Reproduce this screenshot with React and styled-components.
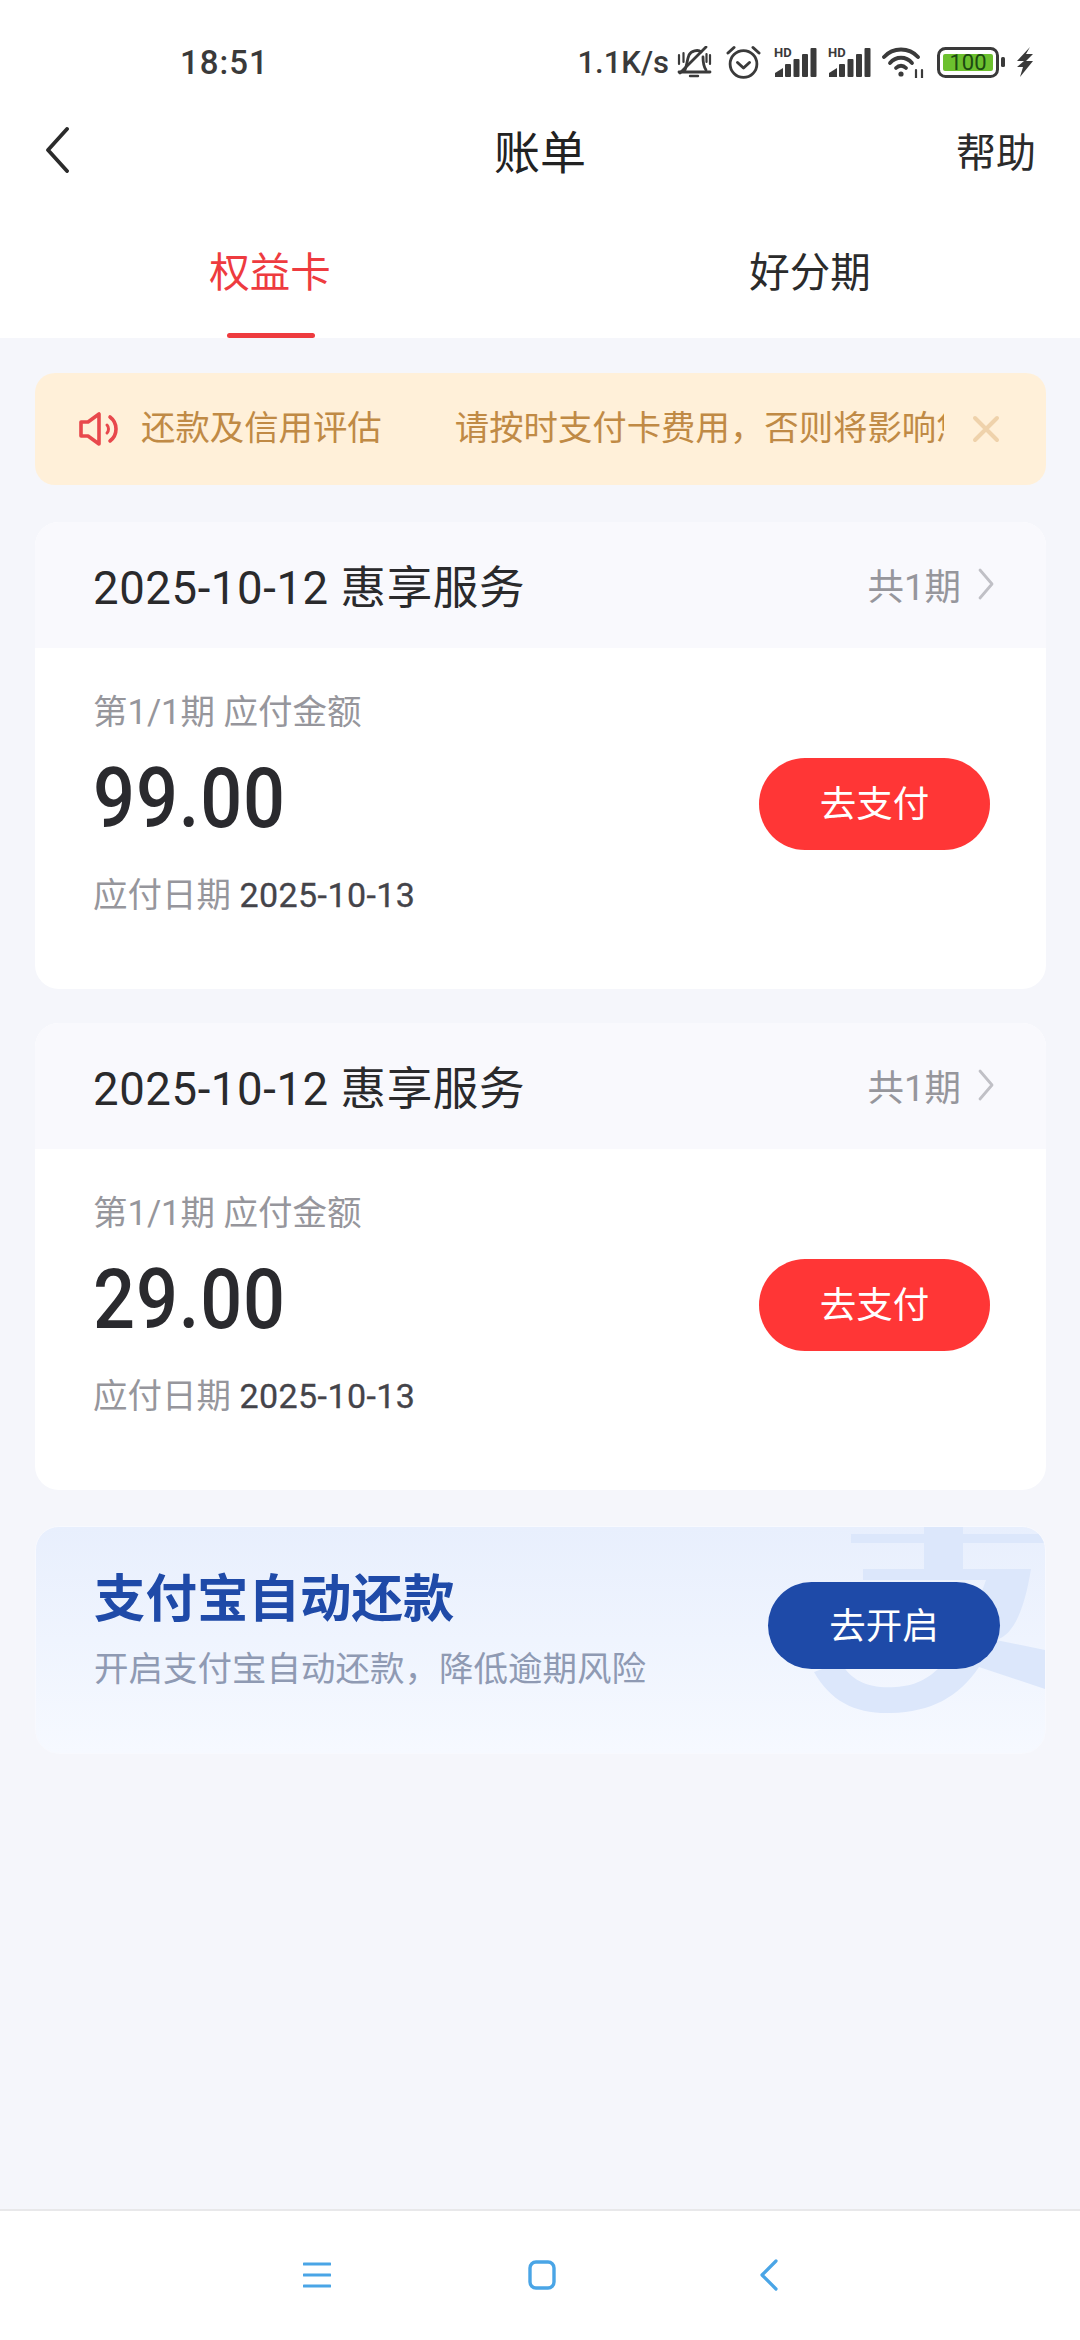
import styled, { createGlobalStyle } from 'styled-components';

const FONT = `Roboto, "Noto Sans CJK SC", sans-serif`;

const GlobalStyle = createGlobalStyle`
  html, body { margin: 0; padding: 0; background: #f5f6fb; }
  * { box-sizing: border-box; }
  body { font-family: ${FONT}; }
`;

const Page = styled.div`
  width: 1080px;
  height: 2340px;
  display: flex;
  flex-direction: column;
  background: #f5f6fb;
  overflow: hidden;
`;

const Top = styled.header`
  background: #fff;
`;

const StatusBar = styled.div`
  height: 84px;
  padding: 40px 46px 0 180px;
  display: flex;
  align-items: center;
  color: #3a3a3a;
`;

const Time = styled.span`
  font-size: 33px;
  font-weight: 500;
  letter-spacing: 1px;
  flex: 1;
`;

const Speed = styled.span`
  font-size: 31px;
  font-weight: 500;
  margin-right: 8px;
`;

const StatusIcons = styled.div`
  display: flex;
  align-items: center;
  gap: 11px;
`;

const IconSlot = styled.span`
  display: flex;
  margin-right: ${({ $extra }) => $extra}px;
`;

const NavBar = styled.div`
  height: 132px;
  padding: 0 44px 0 45px;
  display: flex;
  align-items: center;
  justify-content: space-between;
  position: relative;
`;

const NavTitle = styled.h1`
  position: absolute;
  left: 0;
  right: 0;
  margin: -3px 0 0;
  text-align: center;
  font-size: 46px;
  font-weight: 400;
  color: #222;
`;

const NavAction = styled.span`
  font-size: 40px;
  color: #2b2b2b;
`;

const Tabs = styled.nav`
  height: 122px;
  display: grid;
  grid-template-columns: 540px 540px;
`;

const Tab = styled.div`
  position: relative;
  display: flex;
  justify-content: center;
  padding-top: 32px;
  font-size: 40.5px;
  line-height: 50px;
  color: ${({ $active }) => ($active ? '#ee3b3f' : '#2b2b2b')};
  ${({ $active }) =>
    $active &&
    `&::after {
      content: '';
      position: absolute;
      bottom: 0;
      left: 227px;
      width: 88px;
      height: 5px;
      border-radius: 3px;
      background: #ee3b3f;
    }`}
`;

const Content = styled.main`
  flex: 1;
  padding: 35px 34px 0 35px;
  display: flex;
  flex-direction: column;
`;

const Notice = styled.div`
  height: 112px;
  border-radius: 20px;
  background: #fff0d9;
  padding: 0 44px;
  display: flex;
  align-items: center;
  margin-bottom: 37px;
`;

const NoticeTitle = styled.span`
  font-size: 34.4px;
  line-height: 44px;
  color: #c08a45;
  margin: -2px 0 0 20px;
  white-space: nowrap;
`;

const Marquee = styled.div`
  width: 489px;
  margin: -2px 0 0 73px;
  overflow: hidden;
  white-space: nowrap;
  font-size: 34.4px;
  line-height: 44px;
  color: #c08a45;
`;

const NoticeClose = styled.span`
  margin-left: 28px;
  display: flex;
`;

const Card = styled.section`
  height: 467px;
  border-radius: 24px;
  background: #fff;
  overflow: hidden;
  margin-bottom: 34px;
`;

const CardHeader = styled.div`
  height: 126px;
  padding: 0 52px 2px 58px;
  background: #f9f9fd;
  display: flex;
  align-items: center;
  justify-content: space-between;
`;

const CardTitle = styled.span`
  font-size: 45.5px;
  color: #2a2a2c;
  letter-spacing: 0.6px;
`;

const CardPeriods = styled.span`
  display: flex;
  align-items: center;
  gap: 17px;
  font-size: 36.5px;
  color: #96969c;
`;

const CardBody = styled.div`
  padding: 44px 56px 60px 58px;
  display: flex;
  align-items: center;
  justify-content: space-between;
`;

const Muted = styled.div`
  font-size: 34.5px;
  line-height: 40px;
  color: #96969c;
`;

const Amount = styled.div`
  font-size: 84px;
  line-height: 90px;
  font-weight: 500;
  color: #2a2a2e;
  margin: 22px 0 31px;
  letter-spacing: 1px;
  transform: scaleX(0.88);
  transform-origin: left center;
`;

const DueDate = styled.span`
  color: #44444a;
  font-size: 34px;
  letter-spacing: 0.4px;
  -webkit-text-stroke: 0.3px #44444a;
`;

const PillButton = styled.button`
  width: ${({ $w }) => $w}px;
  height: ${({ $h }) => $h}px;
  flex: none;
  border: 0;
  padding: 0 0 4px;
  border-radius: 50px;
  font-family: ${FONT};
  font-size: 36.5px;
  color: #fff;
  background: ${({ $bg }) => $bg};
  position: relative;
`;

const EnableButton = styled(PillButton)`
  margin-bottom: 29px;
`;

const AutoPay = styled.section`
  height: 228px;
  margin-top: 2px;
  border-radius: 24px;
  border: 1px solid #f8f9fe;
  background: linear-gradient(180deg, #e8effd 0%, #f6f9ff 100%);
  overflow: hidden;
  position: relative;
  padding: 0 45px 0 58px;
  display: flex;
  align-items: center;
  justify-content: space-between;
`;

const AutoPayTitle = styled.div`
  font-size: 51.5px;
  line-height: 60px;
  font-weight: 700;
  color: #1f4aa8;
`;

const AutoPaySub = styled.div`
  font-size: 34.5px;
  line-height: 40px;
  color: #8f9ab3;
  margin-top: 19px;
`;

const AutoPayText = styled.div`
  position: relative;
  margin-bottom: 21px;
`;

const WatermarkBox = styled.span`
  position: absolute;
  left: 745px;
  top: -10px;
  width: 280px;
  height: 240px;
  display: block;
`;

const Footer = styled.footer`
  height: 131px;
  background: #fff;
  border-top: 2px solid #e8e8ea;
  padding: 0 0 2px 303px;
  display: flex;
  align-items: center;
  gap: 197px;
`;

const BackSlot = styled.span`
  display: flex;
  margin-left: 7px;
`;

const BackIcon = () => (
  <svg width="24" height="46" viewBox="0 0 24 46" fill="none">
    <path d="M22 2 L3 23 L22 44" stroke="#2b2b2b" strokeWidth="3.8" strokeLinecap="round" strokeLinejoin="round" />
  </svg>
);

const BellOff = () => (
  <svg width="35" height="32" viewBox="0 0 35 32" fill="none" stroke="#3a3a3a" strokeWidth="2.8" strokeLinecap="round" strokeLinejoin="round">
    <path d="M8 24 C10 19 10 14 12 9 C14 5 21 3 24 6" />
    <path d="M26 11 C26 16 27 21 29 24" />
    <path d="M2 26 H33" />
    <path d="M29 1 L3 27" />
    <path d="M13 30 H21" strokeWidth="2.4" />
    <path d="M2 9 V18 M6.5 7 V16 M29.5 8 V16 M33 9 V18" strokeWidth="2.2" />
  </svg>
);

const Alarm = () => (
  <svg width="35" height="34" viewBox="0 0 35 34" fill="none" stroke="#3a3a3a" strokeWidth="2.8" strokeLinecap="round" strokeLinejoin="round">
    <circle cx="17.5" cy="19" r="13.4" />
    <path d="M11.5 17.5 L17.5 23 L23.5 17.5" strokeWidth="3" />
    <path d="M2 8 L8 2.5 M33 8 L27 2.5" strokeWidth="3" />
  </svg>
);

const SignalIcon = () => (
  <svg width="43" height="30" viewBox="0 0 43 30" fill="#3a3a3a" overflow="visible">
    <text x="0" y="10" fontFamily="Roboto, sans-serif" fontSize="13" fontWeight="700">HD</text>
    <path d="M1 30 V26 L9 21 V30 Z" />
    <rect x="11" y="17" width="6" height="13" rx="1" />
    <rect x="19.5" y="12" width="6" height="18" rx="1" />
    <rect x="28" y="7" width="6" height="23" rx="1" />
    <rect x="36.5" y="1" width="6" height="29" rx="1" />
  </svg>
);

const Wifi = () => (
  <svg width="44" height="31" viewBox="0 0 44 31" fill="none" stroke="#3a3a3a" strokeWidth="3.8" strokeLinecap="round">
    <path d="M2 10 C11 0 27 0 36 10" />
    <path d="M8 16 C14 9 24 9 30 16" />
    <path d="M14 21 C17 18 21 18 24 21" />
    <circle cx="19" cy="27" r="2.6" fill="#3a3a3a" stroke="none" />
    <path d="M34 23 V31 M40 23 V31" strokeWidth="2.2" />
  </svg>
);

const Battery = () => (
  <svg width="68" height="31" viewBox="0 0 68 31">
    <rect x="1.5" y="1.5" width="59" height="28" rx="7" fill="none" stroke="#3a3a3a" strokeWidth="3" />
    <rect x="6" y="7" width="50" height="17" rx="2" fill="#6cc02e" />
    <text x="31" y="23" textAnchor="middle" fontFamily="Roboto, sans-serif" fontSize="22" fill="#1c4a12">100</text>
    <rect x="64" y="10" width="4" height="10" rx="1.5" fill="#3a3a3a" />
  </svg>
);

const Bolt = () => (
  <svg width="18" height="30" viewBox="0 0 18 30" fill="#3a3a3a">
    <path d="M14 0 L1 14 H8 L1 20 H7 L4 30 L17 14 H10 L17 7 H10 Z" />
  </svg>
);

const Speaker = () => (
  <svg width="42" height="36" viewBox="0 0 42 36" fill="none" stroke="#e8484c" strokeWidth="3.6" strokeLinecap="round" strokeLinejoin="round">
    <path d="M2 11 H9 L20 3 V33 L9 25 H2 Z" />
    <path d="M28 14 C30 16 30 20 28 22" strokeWidth="3" />
    <path d="M31 6 C39 12 39 24 31 30" />
  </svg>
);

const CloseIcon = () => (
  <svg width="28" height="28" viewBox="0 0 28 28" fill="none" stroke="#efd2ab" strokeWidth="4" strokeLinecap="round">
    <path d="M3 3 L25 25 M25 3 L3 25" />
  </svg>
);

const Chevron = () => (
  <svg width="16" height="32" viewBox="0 0 16 32" fill="none">
    <path d="M2 2 L14 16 L2 30" stroke="#c0c0c6" strokeWidth="2.8" strokeLinecap="round" strokeLinejoin="round" />
  </svg>
);

const NavMenu = () => (
  <svg width="28" height="28" viewBox="0 0 28 28" fill="none" stroke="#4aa5e6" strokeWidth="3.2" strokeLinecap="round">
    <path d="M1 3 H27 M1 14 H27 M1 25 H27" />
  </svg>
);

const NavHome = () => (
  <svg width="28" height="32" viewBox="0 0 28 32" fill="none">
    <rect x="2" y="3" width="24" height="26" rx="6" stroke="#4aa5e6" strokeWidth="3.4" />
  </svg>
);

const NavBack = () => (
  <svg width="18" height="32" viewBox="0 0 18 32" fill="none">
    <path d="M16 2 L2 16 L16 30" stroke="#4aa5e6" strokeWidth="3.2" strokeLinecap="round" strokeLinejoin="round" />
  </svg>
);

// big pale alipay mark behind the button
const AlipayMark = () => (
  <svg width="280" height="240" viewBox="0 0 280 240" fill="#dce7fb">
    <path d="M70 17 H143 V5 H182 V17 H264 V26 H182 V52 H250 C243 95 232 118 215 123 L264 133 V172 L198 150 C178 180 150 195 110 196 C75 197 50 185 33 155 L60 145 C70 165 90 172 115 170 C150 168 176 145 205 63 H82 V52 H143 V26 H70 Z" />
  </svg>
);

const bills = [
  { id: 1, amount: '99.00' },
  { id: 2, amount: '29.00' },
];

const App = () => (
  <Page>
    <GlobalStyle />
    <Top>
      <StatusBar>
        <Time>18:51</Time>
        <Speed>1.1K/s</Speed>
        <StatusIcons>
          <IconSlot $extra={3}>
            <BellOff />
          </IconSlot>
          <IconSlot $extra={2}>
            <Alarm />
          </IconSlot>
          <SignalIcon />
          <SignalIcon />
          <Wifi />
          <Battery />
          <Bolt />
        </StatusIcons>
      </StatusBar>
      <NavBar>
        <BackIcon />
        <NavTitle>账单</NavTitle>
        <NavAction>帮助</NavAction>
      </NavBar>
      <Tabs>
        <Tab $active>权益卡</Tab>
        <Tab>好分期</Tab>
      </Tabs>
    </Top>
    <Content>
      <Notice>
        <Speaker />
        <NoticeTitle>还款及信用评估</NoticeTitle>
        <Marquee>请按时支付卡费用，否则将影响您的信用评估</Marquee>
        <NoticeClose>
          <CloseIcon />
        </NoticeClose>
      </Notice>
      {bills.map((bill) => (
        <Card key={bill.id}>
          <CardHeader>
            <CardTitle>2025-10-12 惠享服务</CardTitle>
            <CardPeriods>
              共1期
              <Chevron />
            </CardPeriods>
          </CardHeader>
          <CardBody>
            <div>
              <Muted>第1/1期 应付金额</Muted>
              <Amount>{bill.amount}</Amount>
              <Muted>
                应付日期 <DueDate>2025-10-13</DueDate>
              </Muted>
            </div>
            <PillButton $w={231} $h={92} $bg="#ff3636">去支付</PillButton>
          </CardBody>
        </Card>
      ))}
      <AutoPay>
        <WatermarkBox>
          <AlipayMark />
        </WatermarkBox>
        <AutoPayText>
          <AutoPayTitle>支付宝自动还款</AutoPayTitle>
          <AutoPaySub>开启支付宝自动还款，降低逾期风险</AutoPaySub>
        </AutoPayText>
        <EnableButton $w={232} $h={87} $bg="#1e4aa8">去开启</EnableButton>
      </AutoPay>
    </Content>
    <Footer>
      <NavMenu />
      <NavHome />
      <BackSlot>
        <NavBack />
      </BackSlot>
    </Footer>
  </Page>
);

export default App;
